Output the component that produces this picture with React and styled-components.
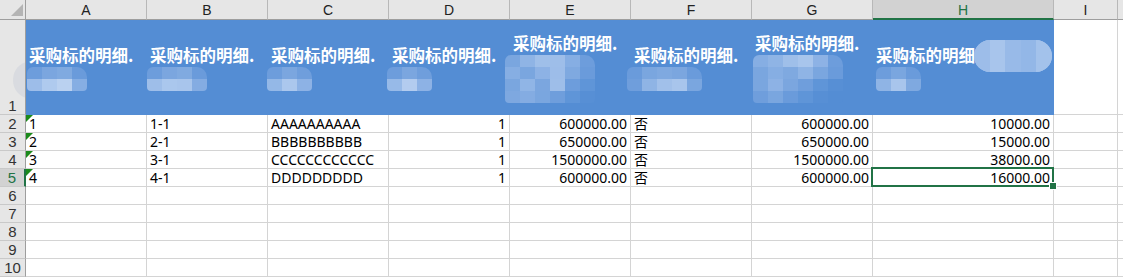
import React from 'react'
import styled, { createGlobalStyle } from 'styled-components'

const BLUE = '#548dd4'
const GREEN = '#217346'

const letters = ['A', 'B', 'C', 'D', 'E', 'F', 'G', 'H', 'I', '']

// mosaic colours stand in for the pixelated blur under each header
const heads = [
  { ml: -2, w: 15, blocks: [['#6d9ddc', '#7ba6df', '#80aae0', '#6a9bdb'], ['#9dbde9', '#afcaee', '#bad1f0', '#86aee3']] },
  { ml: -3, w: 15, blocks: [['#6d9ddc', '#7ba6df', '#80aae0', '#6a9bdb'], ['#9ebee9', '#aac7ed', '#a8c5ec', '#84ace2']] },
  { ml: -4, w: 15, blocks: [['#6d9ddc', '#7ba6df', '#6f9edc'], ['#94b8e7', '#abc7ed', '#8db2e5']] },
  { ml: -5, w: 15, blocks: [['#6d9ddc', '#7ba6df', '#6f9edc'], ['#97bae8', '#b3ccef', '#8db2e5']] },
  {
    ml: -8, w: 15, blocks: [
      ['#7aa6df', '#8fb4e5', '#9fbfe9', '#9ebee9', '#86aee3', '#6d9ddc'],
      ['#86aee3', '#7aa6df', '#8db2e5', '#9dbde9', '#7fa9e0', '#6a9bdb'],
      ['#7aa6df', '#90b5e6', '#7ba6df', '#9ebee9', '#6d9ddc', '#5f95d8'],
      ['#7ea8e0', '#84ace2', '#7aa6df', '#6f9edc', '#5f95d8', '#578fd5'],
    ],
  },
  { ml: -7, w: 15, blocks: [['#6a9bdb', '#7aa6df', '#7fa9e0', '#7ba6df', '#6a9bdb'], ['#6f9edc', '#8fb4e5', '#a1c0ea', '#a8c5ec', '#7aa6df']] },
  {
    ml: -2, w: 15, blocks: [
      ['#86aee3', '#8fb4e5', '#9fbfe9', '#a8c5ec', '#8db2e5', '#6d9ddc'],
      ['#7aa6df', '#86aee3', '#7fa9e0', '#8fb4e5', '#7aa6df', '#6a9bdb'],
      ['#7aa6df', '#8db2e5', '#7ba6df', '#6f9edc', '#5f95d8', '#578fd5'],
      ['#6f9edc', '#7aa6df', '#6a9bdb', '#5f95d8', '#578fd5', '#548dd4'],
    ],
  },
  { ml: 0, w: 15, blocks: [['#6d9ddc', '#7aa6df', '#6a9bdb'], ['#8fb4e5', '#a8c5ec', '#7fa9e0']], cut: true },
]

const rows = [
  ['1', '1-1', 'AAAAAAAAAA', '1', '600000.00', '否', '600000.00', '10000.00'],
  ['2', '2-1', 'BBBBBBBBBB', '1', '650000.00', '否', '650000.00', '15000.00'],
  ['3', '3-1', 'CCCCCCCCCCCC', '1', '1500000.00', '否', '1500000.00', '38000.00'],
  ['4', '4-1', 'DDDDDDDDD', '1', '600000.00', '否', '600000.00', '16000.00'],
]
const align = ['left', 'left', 'left', 'right', 'right', 'left', 'right', 'right']

function Mosaic({ blocks, w, ml }) {
  return (
    <S.Mosaic $cols={blocks[0].length} $w={w} $ml={ml}>
      {blocks.flat().map((c, i) => <S.Block key={i} $c={c} />)}
    </S.Mosaic>
  )
}

function App() {
  return (
    <>
      <GlobalStyle />
      <S.Sheet>
        <S.Corner />
        {letters.map((l, i) => <S.ColHead key={i} $sel={l === 'H'}>{l}</S.ColHead>)}

        <S.RowHead><S.Smudge />1</S.RowHead>
        {heads.map((h, i) => (
          <S.HeadCell key={i}>
            <S.Title>{h.cut ? '采购标的明细' : '采购标的明细.'}</S.Title>
            <Mosaic blocks={h.blocks} w={h.w} ml={h.ml} />
            {h.cut && (
              <S.Pill>
                <S.PillBlock $c="#9dbde9" />
                <S.PillBlock $c="#a8c5ec" />
                <S.PillBlock $c="#98bae8" />
                <S.PillBlock $c="#93b7e7" />
                <S.PillBlock $c="#a3c2eb" />
              </S.Pill>
            )}
          </S.HeadCell>
        ))}
        <S.Cell />
        <S.Cell />

        {Array.from({ length: 9 }, (_, r) => {
          const data = rows[r]
          return (
            <React.Fragment key={r}>
              <S.RowHead $sel={r === 3}>{r + 2}</S.RowHead>
              {Array.from({ length: 8 }, (_, c) => (
                <S.Cell key={c} $align={align[c]} $active={r === 3 && c === 7}>
                  {c === 0 && data && <S.Flag />}
                  {data ? data[c] : ''}
                  {r === 3 && c === 7 && <S.Focus><S.Handle /></S.Focus>}
                </S.Cell>
              ))}
              <S.Cell />
              <S.Cell />
            </React.Fragment>
          )
        })}
      </S.Sheet>
    </>
  )
}

const GlobalStyle = createGlobalStyle`
  html, body {
    margin: 0;
    background: #ffffff;
    overflow: hidden;
  }
`

const S = {}

S.Sheet = styled.div`
  display: grid;
  grid-template-columns: 26px repeat(7, 121px) 181px 64px 1fr;
  grid-template-rows: 20px 95px repeat(9, 18px);
  width: 1123px;
  height: 277px;
  overflow: hidden;
  font-family: "Liberation Sans", "Noto Sans CJK SC", sans-serif;
`

S.Corner = styled.div`
  position: relative;
  background: #e6e6e6;
  border-right: 1px solid #9e9e9e;
  border-bottom: 1px solid #9e9e9e;
  box-sizing: border-box;

  &::after {
    content: '';
    position: absolute;
    left: 11px;
    top: 4px;
    width: 12px;
    height: 12px;
    background: #b4b4b4;
    clip-path: polygon(100% 0, 100% 100%, 0 100%);
  }
`

S.ColHead = styled.div`
  box-sizing: border-box;
  display: flex;
  align-items: center;
  justify-content: center;
  background: ${p => (p.$sel ? '#d2d2d2' : '#e6e6e6')};
  border-right: 1px solid #b8b8b8;
  border-bottom: ${p => (p.$sel ? `2px solid ${GREEN}` : '1px solid #9e9e9e')};
  color: ${p => (p.$sel ? GREEN : '#222')};
  font-size: 14px;
  padding-top: ${p => (p.$sel ? '1px' : '0')};
`

S.RowHead = styled.div`
  position: relative;
  box-sizing: border-box;
  display: flex;
  align-items: flex-end;
  justify-content: center;
  overflow: hidden;
  background: ${p => (p.$sel ? '#d2d2d2' : '#e6e6e6')};
  border-right: ${p => (p.$sel ? `2px solid ${GREEN}` : '1px solid #9e9e9e')};
  border-bottom: 1px solid #c9c9c9;
  color: ${p => (p.$sel ? GREEN : '#333')};
  font-size: 15px;
  line-height: 17px;
`

S.Smudge = styled.div`
  position: absolute;
  left: 13px;
  top: 42px;
  width: 32px;
  height: 36px;
  border-radius: 50%;
  background: #d9dbe0;
`

S.HeadCell = styled.div`
  position: relative;
  box-sizing: border-box;
  display: flex;
  flex-direction: column;
  justify-content: center;
  align-items: flex-start;
  padding-left: 3px;
  background: ${BLUE};
  border-right: 1px solid ${BLUE};
  border-bottom: 1px solid ${BLUE};
`

S.Title = styled.div`
  color: #ffffff;
  font: bold 16.5px/24px "Noto Sans CJK SC", sans-serif;
  white-space: nowrap;
`

S.Mosaic = styled.div`
  display: grid;
  grid-template-columns: repeat(${p => p.$cols}, ${p => p.$w}px);
  grid-auto-rows: 12px;
  margin-left: ${p => p.$ml}px;
  border-radius: 6px 10px 4px 4px;
  overflow: hidden;
`

S.Block = styled.div`
  background: ${p => p.$c};
`

S.Pill = styled.div`
  position: absolute;
  left: 101px;
  top: 20px;
  width: 78px;
  height: 32px;
  display: flex;
  border-radius: 16px;
  overflow: hidden;
  background: #a3c2eb;
`

S.PillBlock = styled.div`
  flex: 1;
  background: ${p => p.$c};
`

S.Cell = styled.div`
  position: relative;
  box-sizing: border-box;
  z-index: ${p => (p.$active ? 2 : 'auto')};
  padding: 0 3px;
  border-right: 1px solid #d4d4d4;
  border-bottom: 1px solid #d4d4d4;
  color: #000;
  font-family: "Noto Sans", "Noto Sans CJK SC", sans-serif;
  font-size: 14px;
  line-height: 17px;
  white-space: nowrap;
  text-align: ${p => p.$align || 'left'};
  overflow: ${p => (p.$active ? 'visible' : 'hidden')};
`

S.Flag = styled.span`
  position: absolute;
  left: 0;
  top: 0;
  width: 7px;
  height: 7px;
  background: #1b8a1b;
  clip-path: polygon(0 0, 100% 0, 0 100%);
`

S.Focus = styled.div`
  position: absolute;
  left: -2px;
  top: -2px;
  right: -1px;
  bottom: -1px;
  border: 2px solid ${GREEN};
  pointer-events: none;
`

S.Handle = styled.div`
  position: absolute;
  right: -5px;
  bottom: -5px;
  width: 6px;
  height: 6px;
  background: ${GREEN};
  border: 1px solid #fff;
`

export default App
